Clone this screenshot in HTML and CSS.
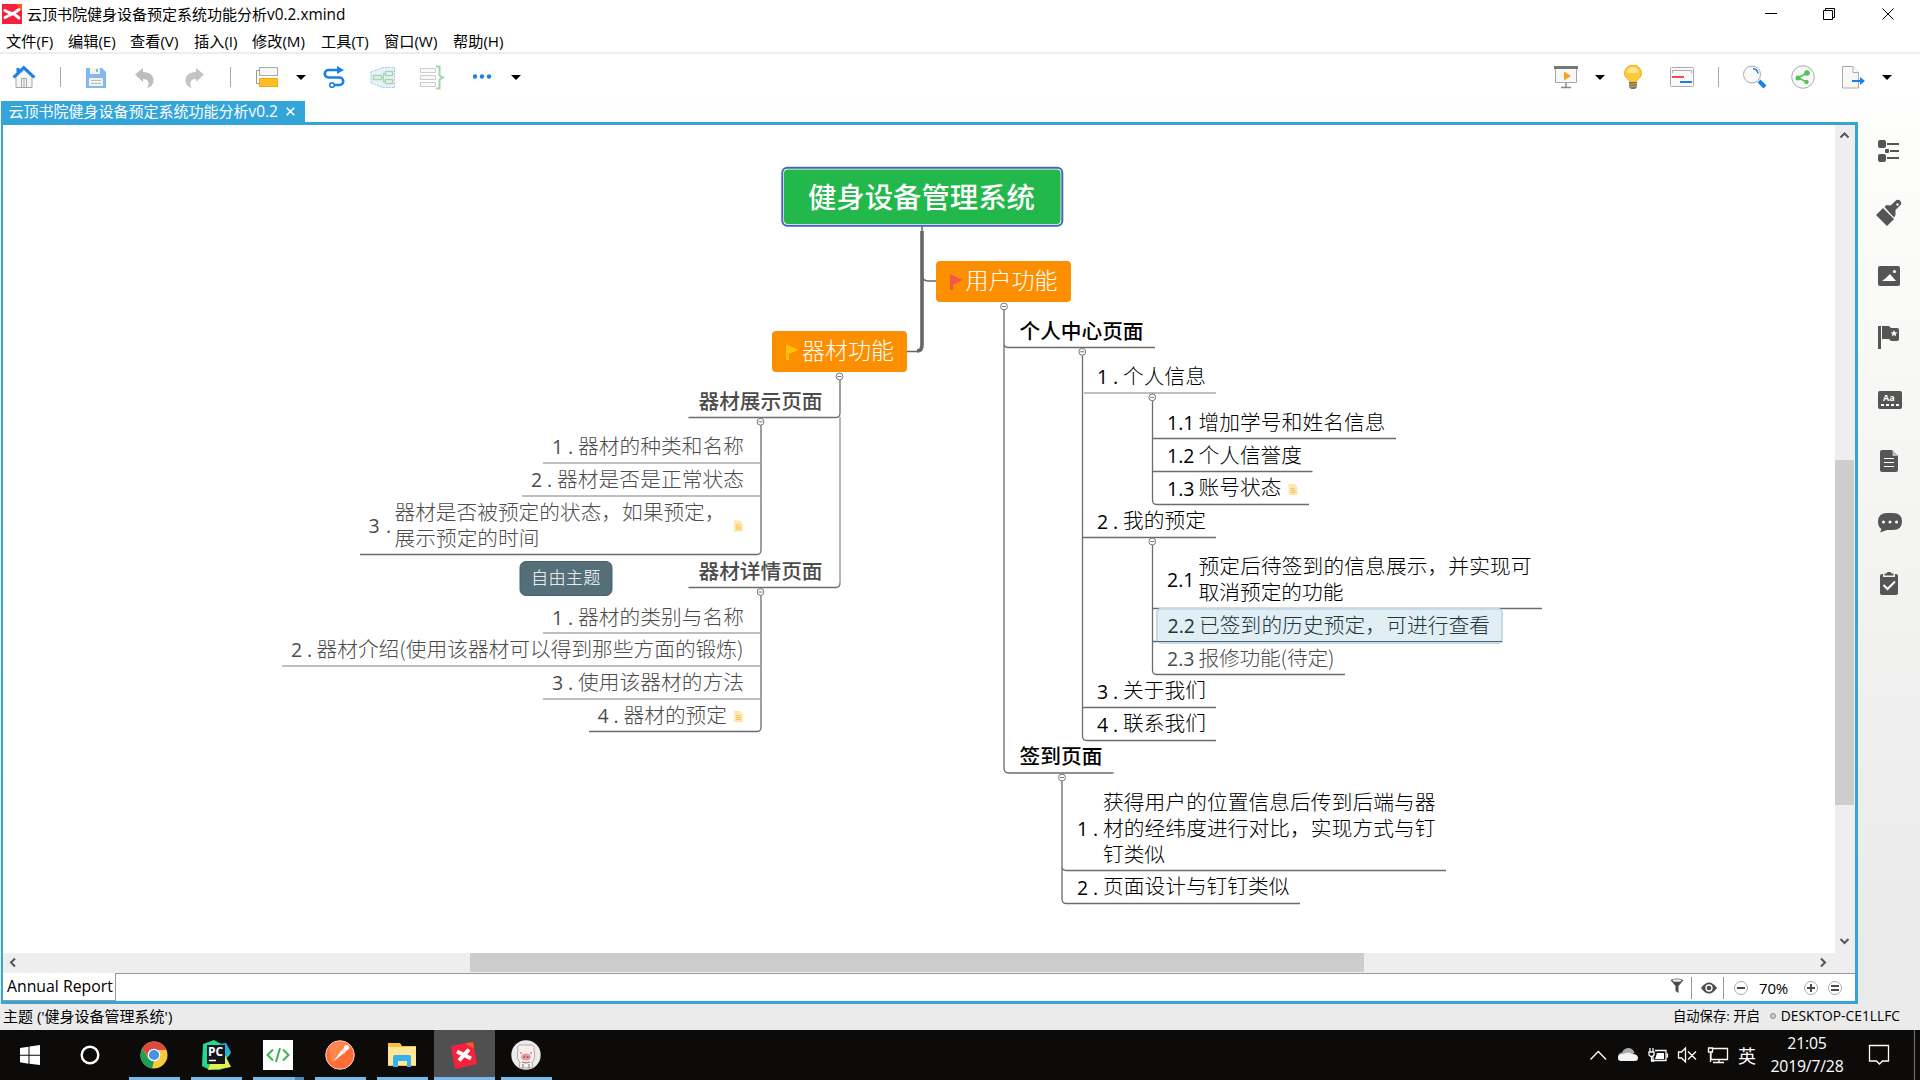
FILE: index.html
```html
<!DOCTYPE html>
<html lang="zh-CN">
<head>
<meta charset="utf-8">
<title>云顶书院健身设备预定系统功能分析v0.2.xmind</title>
<link rel="stylesheet" href="styles.css">
</head>
<body>
<div class="app">
  <header class="titlebar">
    <svg class="logo" width="20" height="20" viewBox="0 0 20 20"><rect width="20" height="20" fill="#f4213f"/><path d="M14 0h6v7z" fill="#fb5a1e"/><path d="M3 6.500 8 9 12 10l5 4M3 13.500l5-2.500 4-2 5-3.500" stroke="#fff" stroke-width="3" stroke-linecap="round" fill="none"/></svg>
    <span class="title">云顶书院健身设备预定系统功能分析<span class="lat">v0.2.xmind</span></span>
    <svg class="wincontrols" width="130" height="28" viewBox="0 0 130 28" fill="none" stroke="#000"><path d="M0 13.500h12M58.500 10.500h9v9h-9zM60.500 10v-1.500h9v9H68" /><path d="M117.500 8.500l11 11M128.500 8.500l-11 11"/></svg>
  </header>
  <nav class="menubar"><span>文件(F)</span><span>编辑(E)</span><span>查看(V)</span><span>插入(I)</span><span>修改(M)</span><span>工具(T)</span><span>窗口(W)</span><span>帮助(H)</span></nav>

  <div class="toolbar">
    <div class="tools tools-left">
      <svg width="24" height="24" viewBox="0 0 24 24"><path d="M4 12v10.500h16V12L12 5z" fill="#f6f6f6" stroke="#a5a5a5"/><path d="M9.500 22v-8.500h5V22M12 14v8" stroke="#a5a5a5" fill="none"/><path d="M1.500 12.500 11.800 2.500 22.500 12.500M6 8V3" stroke="#1a80ea" stroke-width="3" fill="none"/></svg>
      <i class="sep"></i>
      <svg width="20" height="21" viewBox="0 0 20 21"><path d="M0 1h16l4 4v16H0z" fill="#82b7f2"/><path d="M4 1h10v6H4z" fill="#f2f2f2"/><path d="M10 2h2v3h-2z" fill="#82b7f2"/><path d="M3 11h14v8H3z" fill="#f2f2f2"/><path d="M5 13.500h10M5 16.500h10" stroke="#bbb"/></svg>
      <svg width="19" height="21" viewBox="0 0 19 21"><path d="M0 7.500 8 1v4c7 0 11 4 10.500 9-.5 4-3 6-6.500 7 3-4 2-9-4-9v3z" fill="#bdbdbd"/></svg>
      <svg width="19" height="21" viewBox="0 0 19 21"><path d="M19 7.500 11 1v4C4 5 0 9 .5 14c.5 4 3 6 6.500 7-3-4-2-9 4-9v3z" fill="#c4c4c4"/></svg>
      <i class="sep"></i>
      <svg width="22" height="22" viewBox="0 0 22 22"><path d="M4 4.500H.500v13H3" stroke="#999" fill="none"/><rect x="3.500" y="1.500" width="18" height="8" fill="#f7f7f7" stroke="#aaa"/><rect x="3.500" y="12.500" width="18" height="8" fill="#ffbd22" stroke="#f3aa13"/></svg>
      <i class="caret"></i>
      <svg width="22" height="23" viewBox="0 0 22 23"><path d="M16 4H5.500a3.700 3.700 0 0 0 0 7.500h11a3.700 3.700 0 0 1 0 7.500H11" stroke="#1a80ea" stroke-width="2.600" fill="none"/><path d="M14 0l7 4-7 4z" fill="#1a80ea"/><circle cx="9" cy="19" r="2.300" fill="#fff" stroke="#1a80ea" stroke-width="1.600"/></svg>
      <svg width="25" height="23" viewBox="0 0 25 23"><path d="M1 6 13 1.500h11.500v20H13L1 17z" fill="#e9f1fb" stroke="#9ac6f0" stroke-dasharray="2 1"/><path d="M3.500 9.500h8v4h-8zM15.500 5.500h7v4h-7zM15.500 13.500h7v4h-7zM15 7.500h-1.500v8H15M12 11.500h1" fill="none" stroke="#a6d6ad" stroke-width="1.300"/></svg>
      <svg width="25" height="25" viewBox="0 0 25 25"><path d="M.500 3.500h15v4H.500zM.500 10.500h15v4H.500zM.500 17.500h15v4H.500z" fill="#f9f9f9" stroke="#ccc"/><path d="M16 1.500h3.500v9l3.500 2-3.500 2v9H16" fill="none" stroke="#a0d5a9" stroke-width="2"/></svg>
      <svg width="19" height="8" viewBox="0 0 19 8"><g fill="#1a80ea"><circle cx="2" cy="3.500" r="2.200"/><circle cx="9" cy="3.500" r="2.200"/><circle cx="16" cy="3.500" r="2.200"/></g></svg>
      <i class="caret"></i>
    </div>
    <div class="tools tools-right">
      <svg width="24" height="24" viewBox="0 0 24 24"><path d="M1.500 3.500h21v14h-21z" fill="#f8f8f8" stroke="#a6a6a6"/><path d="M0 1h24v3H0z" fill="#777"/><path d="M10 6.500l7 4.500-7 4.500z" fill="#fba316"/><path d="M12 18v4M7 22.500h10" stroke="#888" stroke-width="1.500"/></svg>
      <i class="caret"></i>
      <svg width="18" height="25" viewBox="0 0 18 25"><path d="M6 17C5 14 .500 13 .500 8.500a8.500 8.500 0 0 1 17 0C17.500 13 13 14 12 17z" fill="#ffcb35" stroke="#eea91d"/><path d="M3 8a6 6 0 0 1 12 0z" fill="#ffe591"/><path d="M5 17h8v5l-2 2H7l-2-2z" fill="#737373"/><path d="M5 19.500l8-1M5 22l8-1" stroke="#e6aa38"/></svg>
      <svg width="24" height="20" viewBox="0 0 24 20"><rect x=".500" y=".500" width="23" height="19" rx="1" fill="#f9f9f9" stroke="#aaa"/><path d="M2.500 6V3.500h19V6" fill="none" stroke="#aaa"/><path d="M2 10h12" stroke="#f34a52" stroke-width="2"/><path d="M10 15h12" stroke="#1a80ea" stroke-width="2"/></svg>
      <i class="sep"></i>
      <svg width="24" height="24" viewBox="0 0 24 24"><path d="M16 16l6 6" stroke="#1a80ea" stroke-width="4"/><circle cx="9" cy="9.500" r="8.500" fill="#f7f9fb" stroke="#aaa"/><path d="M10 3.500a6 6 0 0 1 5 5" stroke="#1a80ea" stroke-width="1.500" fill="none"/></svg>
      <svg width="24" height="24" viewBox="0 0 24 24"><circle cx="12" cy="12" r="11.300" fill="#f8f8f8" stroke="#aaa"/><path d="M16 8 7 13l9 4" stroke="#53c257" stroke-width="1.500" fill="none"/><g fill="#53c257"><circle cx="16" cy="8" r="2.800"/><circle cx="7" cy="13" r="2.500"/><circle cx="15.500" cy="17" r="2.200"/></g></svg>
      <svg width="24" height="23" viewBox="0 0 24 23"><path d="M.500.500H11l5.500 6v15.500H.500z" fill="#f8f8f8" stroke="#aaa"/><path d="M11 .500v6h5.500" fill="#fff" stroke="#aaa"/><path d="M10 15h9" stroke="#1a80ea" stroke-width="2"/><path d="M18 11l5 4-5 4z" fill="#1a80ea"/></svg>
      <i class="caret"></i>
    </div>
  </div>

  <div class="workspace">
    <div class="editor">
      <div class="tabs"><div class="tab"><span>云顶书院健身设备预定系统功能分析<span class="lat">v0.2</span></span><svg width="9" height="9" viewBox="0 0 9 9"><path d="M.7.700l7.600 7.600M8.300.700.7 8.300" stroke="#fff" stroke-width="1.600"/></svg></div></div>
      <div class="frame">
        <div class="viewport">
          <svg class="map" width="1832" height="828" viewBox="3 125 1832 828">
            <defs>
              <g id="fold"><circle r="3.400" fill="#fff" stroke="#777"/><path d="M-2 0h4" stroke="#5d7bb5"/></g>
              <g id="note"><path d="M0 0h6l3 3v8H0z" fill="#ffe7ae"/><path d="M2 4.500h4M2 6.500h5M2 8.500h5" stroke="#f3b93d" stroke-width=".8"/></g>
            </defs>
            <g class="wire trunk"><path d="M922 231v114q0 6-5 6" /><path class="thin" d="M922 225v8M922 274q0 7 6 7h9M918 351.500h-12"/></g>
            <g class="wire">
              <path d="M1004 304v464q0 5 5 5h104.500M1004 343q0 4.500 4 4.500h147"/>
              <path d="M1082.500 348v388q0 4.500 4 4.500h129.500M1082.500 537.500H1216M1082.500 707.500H1216"/>
              <path d="M1152.500 393v107q0 4.500 4 4.500h152.500M1152.500 438.500H1396M1152.500 471.500h160"/>
              <path d="M1152.500 538v132q0 4.500 4 4.500H1345M1152.500 608.500H1542M1152.500 641.500h350"/>
              <path d="M1062 774v125q0 4.500 4 4.500h234M1062 866q0 4.500 4 4.500h380"/>
              <path d="M840 373v40q0 4.500-4 4.500H688.500M840 583q0 4.500-4 4.500H688.500"/>
              <path d="M761 418v132q0 4.500-4 4.500H360"/>
              <path d="M761 588v139q0 4.500-4 4.500H589"/>
            </g>
            <g class="wire soft">
              <path d="M840 417v166M1084 393h132M543 463h218M522 496h239M543 633h218M282 666h479M543 699h218"/>
            </g>
            <use href="#fold" x="1004" y="306.500"/><use href="#fold" x="1082.300" y="351.800"/><use href="#fold" x="1152.300" y="397.300"/><use href="#fold" x="1152.300" y="541.500"/><use href="#fold" x="1062" y="777.500"/><use href="#fold" x="839.500" y="376.500"/><use href="#fold" x="760.500" y="421.800"/><use href="#fold" x="760.500" y="592"/>

            <rect x="782.300" y="167.800" width="280" height="58" rx="5" fill="#fff" stroke="#4467b7" stroke-width="2"/>
            <rect x="784" y="169.500" width="276.600" height="54.600" rx="4" fill="#22b84b"/>
            <text class="root" x="808" y="207.500" textLength="227">健身设备管理系统</text>

            <rect x="936" y="261" width="135" height="41" rx="4" class="main"/>
            <path d="M950 290v-16l12.500 6-9.500 5v5z" fill="#f4554f"/>
            <text class="branch" x="965.500" y="289" textLength="92">用户功能</text>
            <rect x="772" y="331" width="135" height="41" rx="4" class="main"/>
            <path d="M786 360v-16l12.500 6-9.500 4v6z" fill="#ffbf0b"/>
            <text class="branch" x="802" y="359" textLength="92">器材功能</text>

            <g class="topic dark">
              <text class="b" x="1019.500" y="339" textLength="124">个人中心页面</text>
              <text class="n" x="1097 1113" y="384">1.</text><text x="1123" y="384" textLength="83">个人信息</text>
              <text class="n" x="1167" y="430">1.1</text><text x="1198.500" y="430" textLength="187">增加学号和姓名信息</text>
              <text class="n" x="1167" y="463">1.2</text><text x="1198.500" y="463" textLength="103.500">个人信誉度</text>
              <text class="n" x="1167" y="495.500">1.3</text><text x="1198.500" y="494.500" textLength="83">账号状态</text>
              <text class="n" x="1097 1113" y="529">2.</text><text x="1123" y="528" textLength="83">我的预定</text>
              <text class="n" x="1167" y="587">2.1</text><text x="1198.500" y="574" textLength="333">预定后待签到的信息展示，并实现可</text><text x="1198.500" y="600" textLength="145">取消预定的功能</text>
              <text class="n" x="1097 1113" y="698.500">3.</text><text x="1123" y="698" textLength="83">关于我们</text>
              <text class="n" x="1097 1113" y="731.500">4.</text><text x="1123" y="731" textLength="83">联系我们</text>
              <text class="b" x="1019.500" y="764" textLength="83">签到页面</text>
              <text x="1103" y="809.500" textLength="332.500">获得用户的位置信息后传到后端与器</text>
              <text class="n" x="1077 1093" y="835.500">1.</text><text x="1103" y="836" textLength="332.500">材的经纬度进行对比，实现方式与钉</text>
              <text x="1103" y="862" textLength="62">钉类似</text>
              <text class="n" x="1077 1093" y="894.500">2.</text><text x="1103" y="893.500" textLength="186.500">页面设计与钉钉类似</text>
            </g>
            <g class="topic">
              <text class="n" x="1167" y="666">2.3</text><text x="1198.500" y="666" textLength="136">报修功能(待定)</text>
              <text class="b" x="698.500" y="409" textLength="124">器材展示页面</text>
              <text class="n" x="552 568" y="454">1.</text><text x="578" y="454" textLength="166">器材的种类和名称</text>
              <text class="n" x="531 547" y="487">2.</text><text x="557" y="486.500" textLength="187">器材是否是正常状态</text>
              <text class="n" x="368.500 386" y="532.500">3.</text><text x="394.500" y="520" textLength="331">器材是否被预定的状态，如果预定，</text><text x="394.500" y="546" textLength="145">展示预定的时间</text>
              <text class="b" x="698.500" y="579" textLength="124">器材详情页面</text>
              <text class="n" x="552 568" y="624.500">1.</text><text x="578" y="624.500" textLength="166">器材的类别与名称</text>
              <text class="n" x="291 307" y="657">2.</text><text x="316.500" y="657" textLength="427">器材介绍(使用该器材可以得到那些方面的锻炼)</text>
              <text class="n" x="552 568" y="690">3.</text><text x="578" y="690" textLength="166">使用该器材的方法</text>
              <text class="n" x="597.500 613.500" y="723">4.</text><text x="623.500" y="723" textLength="103.500">器材的预定</text>
            </g>
            <rect x="1157" y="609" width="345" height="34" rx="4" class="hover"/>
            <path d="M1153 641.500h349" stroke="#53656c"/>
            <g class="topic picked"><text class="n" x="1167.500" y="633">2.2</text><text x="1199" y="633" textLength="291">已签到的历史预定，可进行查看</text></g>
            <use href="#note" x="1288.500" y="484"/><use href="#note" x="734" y="520.500"/><use href="#note" x="734" y="711"/>
            <rect x="520" y="561.500" width="92" height="34" rx="6" fill="#546e7a" stroke="#47636c"/>
            <text class="free" x="531" y="584" textLength="69.500">自由主题</text>
          </svg>
          <div class="vscroll">
            <svg width="20" height="20" viewBox="0 0 20 20"><path d="M5.500 12.500l4-4 4 4" class="arr"/></svg>
            <i class="vthumb"></i>
            <svg width="20" height="20" viewBox="0 0 20 20"><path d="M5.500 6l4 4 4-4" class="arr"/></svg>
          </div>
        </div>
        <div class="hscroll">
          <svg width="20" height="20" viewBox="0 0 20 20"><path d="M12 5.500l-4 4 4 4" class="arr"/></svg>
          <i class="hthumb"></i>
          <svg width="20" height="20" viewBox="0 0 20 20"><path d="M6 5.500l4 4-4 4" class="arr"/></svg>
        </div>
        <div class="sheets">
          <div class="sheet">Annual Report</div>
          <div class="zoombar">
            <svg width="90" height="26" viewBox="1666 974 90 26"><path d="M1670.500 979q6.500-3 13 0l-5 6v7l-3-2v-5z" fill="#4a4c46"/><ellipse cx="1677" cy="979.500" rx="4.500" ry="1.300" fill="#eee"/><path d="M1691.500 976v22M1723.500 976v22" stroke="#999"/><path d="M1701 987q8-11 16 0-8 11-16 0z" fill="#4a4c46"/><circle cx="1709" cy="987" r="3" fill="none" stroke="#fff" stroke-width="1.300"/><circle cx="1741" cy="987" r="6.500" fill="#fff" stroke="#aaa"/><path d="M1737 987h8" stroke="#4a4c46" stroke-width="2"/></svg>
            <span>70%</span>
            <svg width="53" height="26" viewBox="1802 974 53 26"><g fill="#fff" stroke="#aaa"><circle cx="1811" cy="987" r="6.500"/><circle cx="1835" cy="987" r="6.500"/></g><path d="M1807 987h8M1811 983v8M1831 985h8M1831 989h8" stroke="#4a4c46" stroke-width="2"/></svg>
          </div>
        </div>
      </div>
    </div>
    <aside class="sidebar">
      <svg width="62" height="903" viewBox="1858 101 62 903" fill="#555">
        <rect x="1878" y="140" width="8" height="8" rx="2"/><rect x="1878" y="154" width="8" height="8" rx="2"/><rect x="1885" y="149" width="4" height="4" rx="1"/><path d="M1887 143h12v2h-12zM1890 150h9v2h-9zM1887 157h12v2h-12z"/>
        <path d="M1876 215l7-7 11 11-7 7zM1884.500 207l2-2 4 .5 6-5.500a3.500 3.500 0 0 1 4.500 4.500l-5.500 5.500v5l-1.500 2.500z"/><circle cx="1897.500" cy="204.500" r="1.200" fill="#fff"/>
        <rect x="1878" y="266" width="22" height="20" rx="2"/><path d="M1882 281l4-3 4-4 6 7z" fill="#fff"/><circle cx="1894.500" cy="271.500" r="1.600" fill="#fff"/>
        <path d="M1878 326h3v23h-3zM1882 326h7l2 2h6q2 0 2 2v9q0 2-2 2h-6l-2-2h-7z"/><path d="M1894 330l1 2.200 2.400.2-1.800 1.500.6 2.300-2.200-1.300-2.200 1.300.6-2.300-1.800-1.500 2.400-.2z" fill="#fff"/>
        <rect x="1878" y="391" width="24" height="18" rx="2"/><text class="aa" x="1883" y="401">Aa</text><path d="M1881 405h18" stroke="#fff" stroke-width="2" stroke-dasharray="3 2"/>
        <path d="M1882 450h10l6 6v14q0 2-2 2h-14q-2 0-2-2v-18q0-2 2-2z"/><path d="M1892.500 450v6h5.500z" fill="#bbb"/><path d="M1884 458.500h10M1884 462.500h10M1884 466.500h10" stroke="#fff"/>
        <path d="M1887 513h6q9 0 9 8.500t-9 8.500h-6l-7 2.500 1.500-3.500q-3.500-2-3.500-7.500 0-8.500 9-8.500z"/><g fill="#fff"><circle cx="1883.500" cy="522" r="1.500"/><circle cx="1890" cy="522" r="1.500"/><circle cx="1896.500" cy="522" r="1.500"/></g>
        <path d="M1882 574h1v3h12v-3h1q2 0 2 2v17q0 2-2 2h-14q-2 0-2-2v-17q0-2 2-2zM1884.500 575.500v-2h2q0-1.500 1.500-1.500h2q1.500 0 1.500 1.500h2v2z"/><path d="M1883.500 585l4 4 7.500-7.500" fill="none" stroke="#fff" stroke-width="2"/>
      </svg>
    </aside>
  </div>

  <footer class="statusbar"><span class="st-topic">主题 ('健身设备管理系统')</span><span class="st-save">自动保存: 开启</span><i class="dot"></i><span class="st-host">DESKTOP-CE1LLFC</span></footer>

  <div class="taskbar">
    <div class="launch"><svg width="20" height="20" viewBox="0 0 20 20"><path d="M0 3l8.500-1.300v8H0zM9.500 1.500 20 0v9.700H9.500zM0 10.700h8.500v8L0 17.300zM9.500 10.700H20V20L9.500 18.700z" fill="#fff"/></svg></div>
    <div class="launch"><svg width="20" height="20" viewBox="0 0 20 20"><circle cx="10" cy="10" r="8.300" fill="none" stroke="#fff" stroke-width="2.400"/></svg></div>
    <div class="launch run"><svg width="28" height="28" viewBox="0 0 28 28"><circle cx="14" cy="14" r="13.500" fill="#fbc93d"/><path d="M2.300 7.300A13.500 13.500 0 0 1 25.700 7.300L26 9H14L8 16z" fill="#dc4a3e"/><path d="M2.300 7.300 8.300 17.500 14 20.300 12 27.400A13.500 13.500 0 0 1 2.300 7.300z" fill="#1f9e58"/><circle cx="14" cy="14" r="6.300" fill="#fff"/><circle cx="14" cy="14" r="5.100" fill="#4a90e8"/></svg></div>
    <div class="launch run"><svg width="30" height="30" viewBox="0 0 30 30"><path d="M2 4 13 0l9 5 8 8-5 6 3 8-10 3-11-1-6-3z" fill="#23d790"/><path d="M18 4l7-1 5 9-7 6z" fill="#22aee0"/><path d="M22 12l4 7 4 8-12 2-11 1 3-8z" fill="#e4ed52"/><rect x="6" y="5" width="18" height="19" fill="#15151a"/><text class="pc" x="7" y="16">PC</text><path d="M8 20.500h7" stroke="#fff" stroke-width="1.500"/></svg></div>
    <div class="launch run split"><svg width="30" height="30" viewBox="0 0 30 30"><path d="M0 0h30v30H0z" fill="#fff"/><path d="M10 9.500 4.500 15l5.500 5.500M20 9.500l5.500 5.500-5.500 5.500M17 8l-4 14" fill="none" stroke="#3bb54a" stroke-width="2"/></svg></div>
    <div class="launch run"><svg width="30" height="30" viewBox="0 0 30 30"><circle cx="15" cy="15" r="14.300" fill="#ff6c37" stroke="#ffd0bd"/><path d="M4 8a13 13 0 0 1 22 0l-11 6-9 9z" fill="#ff9257" opacity=".7"/><path d="M8 22l8-11 3 2z" fill="#fff"/><path d="M16 11l4-4 2 3-3 4z" fill="#ffe4da"/><circle cx="21.500" cy="7.500" r="2.600" fill="#fff"/></svg></div>
    <div class="launch run"><svg width="28" height="24" viewBox="0 0 28 24"><path d="M0 0h12l2 3h14v20H0z" fill="#f6c13e"/><path d="M0 4h28v18H0z" fill="#ffe79a"/><path d="M5 24V14q0-2 2-2h14q2 0 2 2v10h-4v-6h-9v6z" fill="#39b0ee"/></svg></div>
    <div class="launch run active"><svg width="28" height="28" viewBox="0 0 28 28"><path d="M1 5 23 1l4 22-22 5z" fill="#f7203f"/><path d="M15 2.500 23 1l1 7z" fill="#fb5a1e"/><path d="M7 10.500l14 7M9 19.500l10-11" stroke="#fff" stroke-width="4" fill="none"/></svg></div>
    <div class="launch run"><svg width="30" height="30" viewBox="0 0 30 30"><circle cx="15" cy="15" r="14.700" fill="#eeeaea"/><path d="M7 10q-1-6 3-5h10q4-1 3 5 2 9-2 12l1 6H8l1-6q-4-3-2-12z" fill="#faeeee" stroke="#999" stroke-width=".8"/><ellipse cx="15" cy="17" rx="5" ry="3.500" fill="#e99a9a"/><circle cx="13.300" cy="17" r="1" fill="#a55"/><circle cx="16.700" cy="17" r="1" fill="#a55"/><path d="M9 13h2M19 13h2M11 22q4 2 8 0M12 28v-4M18 28v-4" stroke="#777" fill="none"/></svg></div>
    <div class="tray">
      <svg width="140" height="50" viewBox="1590 1030 140 50" fill="none" stroke="#fff" stroke-width="1.300"><path d="M1590.500 1059.500l7.800-8 7.800 8"/><g stroke="none"><path d="M1618 1057q0-4 4-4.500 1.500-4 6-4.500 5 0 6.500 5l-12 7z" fill="#aaa"/><path d="M1618 1058q0-4 5-4 6-3 9 0 6 0 6 4 0 3-3 3h-14q-3 0-3-3z" fill="#f4f4f4"/></g><path d="M1655 1050.500h11v10h-13v-4M1667.500 1053.500v4M1649 1052h5v3q-2.500 3-5 0zM1650 1048v4M1653 1048v4M1651.500 1057v4h3"/><path d="M1657 1053h7v6h-9z" fill="#fff" stroke="none"/><path d="M1678.500 1052h3l4-4v14l-4-4h-3zM1688 1051.500l8 8M1696 1051.500l-8 8M1712 1048.500h15.500v11H1711v-7M1719 1060v3M1713 1062.500h11M1708.500 1048h4v4h-4zM1710.500 1052v10"/></svg>
      <span class="ime">英</span>
      <div class="clock"><span>21:05</span><span>2019/7/28</span></div>
      <svg width="48" height="50" viewBox="1868 1030 48 50" fill="none" stroke="#fff" stroke-width="1.300"><path d="M1869.500 1045.500h19v15.500h-6l-3 3-3-3h-7z"/><path d="M1914.500 1030v50" stroke="#666"/></svg>
    </div>
  </div>
</div>
</body>
</html>
```
FILE: styles.css
```css
* { box-sizing: border-box; }
body { margin: 0; background: #fff; color: #000; font: 15px/20px "Noto Sans CJK SC", sans-serif; overflow: hidden; }
svg { display: block; flex: none; }
.app { display: flex; flex-direction: column; width: 1920px; height: 1080px; }
.lat { font-family: "Open Sans", "Noto Sans CJK SC", sans-serif; font-size: 15.4px; }

.titlebar { display: flex; align-items: center; height: 28px; padding-left: 2px; }
.title { margin-left: 5px; white-space: nowrap; }
.wincontrols { margin: 0 25px 0 auto; }
.menubar { display: grid; grid-template-columns: 62px 62px 64px 58px 69px 63px 69px 70px; align-items: center; height: 26px; padding: 1px 0 0 6px; border-bottom: 2px solid #eee; white-space: nowrap; font-family: "Open Sans", "Noto Sans CJK SC", sans-serif; font-size: 15.2px; }

.toolbar { display: flex; justify-content: space-between; height: 47px; padding: 0 0 1px 12px; }
.tools { display: grid; align-items: center; }
.tools-left { grid-template-columns: 48px 26px 49px 50px 45px 26px 40px 27px 47px 50px 53px 38px 10px; }
.tools-right { grid-template-columns: 41px 29px 46px 48px 25px 48px 51px 40px 38px; }
.sep { width: 1px; height: 20px; background: #aaa; }
.caret { width: 0; height: 0; border: 5px solid transparent; border-top-color: #000; border-bottom: 0; }

.workspace { display: flex; height: 903px; background: linear-gradient(#fefefc, #eaeaea 93%); }
.editor { width: 1857px; padding-left: 1px; }
.tabs { height: 21px; }
.tab { display: flex; align-items: center; gap: 8px; width: 304px; height: 21px; padding-left: 7.5px; background: #34a5d8; color: #fff; white-space: nowrap; }
.frame { width: 1857px; height: 882px; border: solid #34a5d8; border-width: 3px 3px 3px 2px; background: #fff; }
.viewport { display: flex; height: 828px; }
.vscroll { display: flex; flex-direction: column; width: 20px; background: #eee; }
.vthumb { width: 19px; height: 345px; margin: 315px 0 auto; background: #cdcdcd; }
.hscroll { display: flex; height: 20px; background: #eee; padding-right: 20px; }
.hthumb { width: 894px; height: 19px; margin: 0 auto 0 447px; background: #cdcdcd; }
.arr { fill: none; stroke: #555; stroke-width: 2; }
.sheets { display: flex; height: 28px; }
.sheet { width: 113px; padding: 3px 0 0 4px; border: solid #999; border-width: 0 1px 1px 0; font: 15.8px/20px "Open Sans", sans-serif; white-space: nowrap; }
.zoombar { display: flex; flex: 1; justify-content: flex-end; align-items: center; border-top: 1px solid #999; }
.zoombar span { width: 46px; padding-left: 3px; font: 15px/20px "Open Sans", sans-serif; letter-spacing: -0.2px; }
.sidebar { width: 62px; height: 903px; padding-left: 1px; overflow: hidden; }
.aa { font: bold 9px "Open Sans", sans-serif; fill: #fff; }

.map { font-family: "Noto Sans CJK SC", sans-serif; }
.wire { fill: none; stroke: #6c6c6c; stroke-width: 1.3; }
.trunk { stroke: #666; stroke-width: 3.6; }
.thin { stroke-width: 1.5; }
.soft { stroke: #aaa; stroke-width: 1.7; }
.main { fill: #fc8f00; }
.root { font-size: 28.4px; font-weight: 500; fill: #fff; }
.branch { font-size: 23px; font-weight: 300; fill: #fff; }
.topic { font-size: 20.7px; font-weight: 300; fill: #4c4c4c; }
.dark { fill: #000; }
.picked { fill: #20343b; }
.b { font-weight: 500; }
.n { font-family: "Open Sans", sans-serif; font-size: 19.5px; font-weight: 400; }
.hover { fill: #e1eff5; stroke: #c5dae9; stroke-width: 2; }
.free { font-size: 17.2px; font-weight: 300; fill: #fff; }

.statusbar { display: flex; align-items: center; height: 26px; padding: 0 20px 2px 3px; background: #ebebeb; font: 15px/20px "Open Sans", "Noto Sans CJK SC", sans-serif; white-space: nowrap; }
.st-save { margin-left: auto; font-size: 13.3px; }
.st-host { font-size: 13.8px; }
.dot { width: 6px; height: 6px; margin: 0 5px 0 10px; border: 1px solid #888; border-radius: 50%; background: #ccc; }

.taskbar { display: flex; height: 50px; background: #0d0b0a; color: #fff; }
.launch { display: flex; align-items: center; justify-content: center; width: 60px; border-bottom: 3px solid transparent; padding-top: 3px; }
.launch:nth-child(2) { margin-right: 3px; }
.run { width: 51px; margin: 0 5.5px; border-bottom-color: #76b9ed; }
.split { border-image: linear-gradient(90deg, #76b9ed 79%, #4a86b8 79%) 3; border-width: 0 0 3px; border-style: solid; }
.active { width: 61px; margin: 0 .5px; background: #505050; }
.pc { font: bold 12px "Open Sans", sans-serif; fill: #fff; }
.tray { display: flex; align-items: center; margin-left: auto; padding-right: 4px; }
.ime { width: 18px; margin-left: 8px; font-size: 18px; }
.clock { display: flex; flex-direction: column; align-items: center; width: 112px; padding-right: 10px; font: 15.8px/23px "Open Sans", sans-serif; letter-spacing: -0.2px; }
```
